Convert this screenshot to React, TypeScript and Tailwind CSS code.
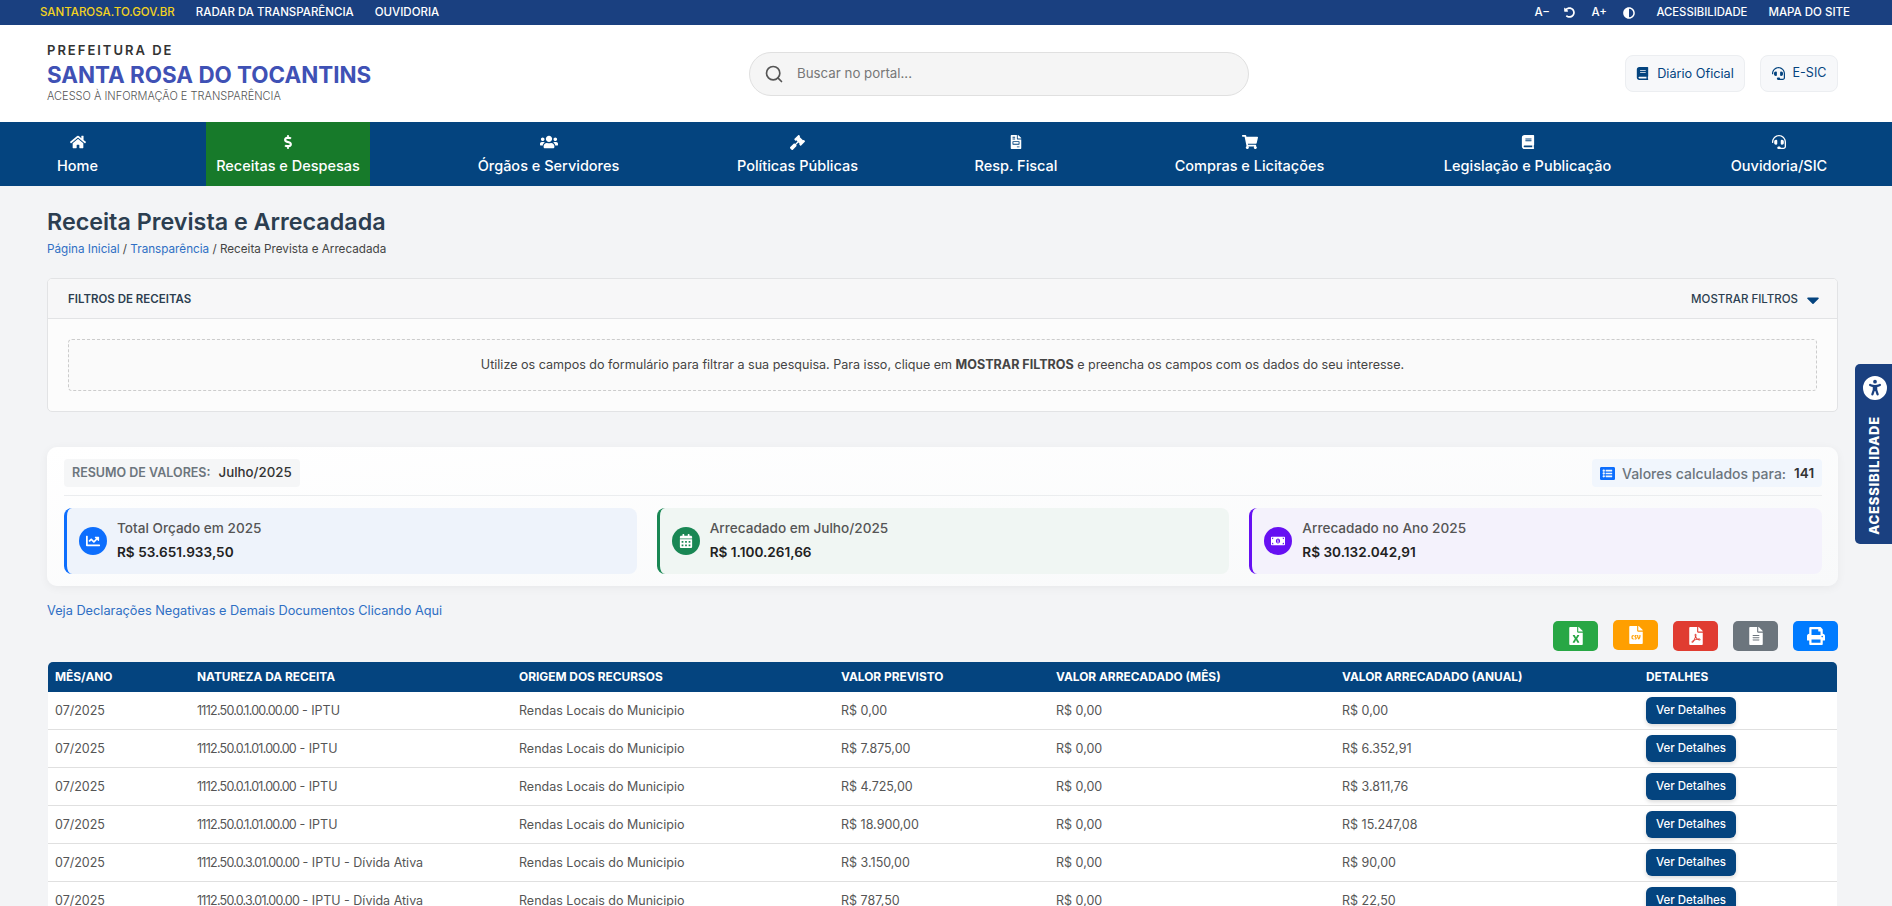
import React from 'react';
import { Search } from 'lucide-react';
import {
  FaHome, FaDollarSign, FaUsers, FaGavel, FaFileInvoice, FaShoppingCart, FaBook, FaHeadset,
  FaUndoAlt, FaAdjust, FaCaretDown, FaListAlt, FaChartLine, FaCalendarAlt, FaMoneyBillAlt,
  FaFileExcel, FaFileCsv, FaFilePdf, FaFileAlt, FaPrint,
} from 'react-icons/fa';
import { FaUniversalAccess } from 'react-icons/fa6';

const navItems = [
  { label: 'Home', icon: FaHome, w: 'w-[61px]', size: 'text-[16px]' },
  { label: 'Receitas e Despesas', icon: FaDollarSign, w: 'w-[164px]', size: 'text-[14px]', active: true },
  { label: 'Órgãos e Servidores', icon: FaUsers, w: 'w-[161px]', size: 'text-[18px]' },
  { label: 'Políticas Públicas', icon: FaGavel, w: 'w-[141px]', size: 'text-[15px]' },
  { label: 'Resp. Fiscal', icon: FaFileInvoice, w: 'w-[100px]', size: 'text-[14px]' },
  { label: 'Compras e Licitações', icon: FaShoppingCart, w: 'w-[171px]', size: 'text-[16px]' },
  { label: 'Legislação e Publicação', icon: FaBook, w: 'w-[189px]', size: 'text-[14px]' },
  { label: 'Ouvidoria/SIC', icon: FaHeadset, w: 'w-[118px]', size: 'text-[14px]' },
];

const rows = [
  ['1112.50.0.1.00.00.00', ' - IPTU', 'R$ 0,00', 'R$ 0,00'],
  ['1112.50.0.1.01.00.00', ' - IPTU', 'R$ 7.875,00', 'R$ 6.352,91'],
  ['1112.50.0.1.01.00.00', ' - IPTU', 'R$ 4.725,00', 'R$ 3.811,76'],
  ['1112.50.0.1.01.00.00', ' - IPTU', 'R$ 18.900,00', 'R$ 15.247,08'],
  ['1112.50.0.3.01.00.00', ' - IPTU - Dívida Ativa', 'R$ 3.150,00', 'R$ 90,00'],
  ['1112.50.0.3.01.00.00', ' - IPTU - Dívida Ativa', 'R$ 787,50', 'R$ 22,50'],
];

const summaryCards = [
  { title: 'Total Orçado em 2025', value: 'R$ 53.651.933,50', icon: FaChartLine, box: 'bg-[#eef3fb] border-[#0d6efd]', circle: 'bg-[#0d6efd]' },
  { title: 'Arrecadado em Julho/2025', value: 'R$ 1.100.261,66', icon: FaCalendarAlt, box: 'bg-[#f0f6f3] border-[#198754]', circle: 'bg-[#198754]' },
  { title: 'Arrecadado no Ano 2025', value: 'R$ 30.132.042,91', icon: FaMoneyBillAlt, box: 'bg-[#f4f2fc] border-[#6610f2]', circle: 'bg-[#6610f2]' },
];

const exportButtons = [
  { icon: FaFileExcel, color: 'bg-[#28a745]', offset: '' },
  { icon: FaFileCsv, color: 'bg-[#ff9f00]', offset: '-mt-px' },
  { icon: FaFilePdf, color: 'bg-[#e03c31]', offset: '' },
  { icon: FaFileAlt, color: 'bg-[#6c757d]', offset: '' },
  { icon: FaPrint, color: 'bg-[#007bff]', offset: '' },
];

export default function App() {
  return (
    <div className="relative h-[906px] overflow-hidden bg-[#f3f4f6] font-['Inter',sans-serif] text-[#333]">
      {/* Barra superior */}
      <div className="flex h-[25px] items-center justify-between bg-[#1a4080] pl-[40px] pr-[42px] text-[11.5px] font-medium text-white">
        <div className="flex items-center gap-[21px]">
          <span className="text-[#f2d21f]">SANTAROSA.TO.GOV.BR</span>
          <span>RADAR DA TRANSPARÊNCIA</span>
          <span>OUVIDORIA</span>
        </div>
        <div className="flex items-center">
          <span className="w-[30px]">A−</span>
          <FaUndoAlt className="mr-[16px] text-[11px]" />
          <span className="w-[32px]">A+</span>
          <FaAdjust className="mr-[21px] text-[12px]" />
          <span className="mr-[21px] text-[11.3px]">ACESSIBILIDADE</span>
          <span>MAPA DO SITE</span>
        </div>
      </div>

      {/* Cabeçalho */}
      <div className="flex h-[97px] items-center bg-white pl-[47px] pr-[54px]">
        <div className="-mt-[2px] w-[702px]">
          <div className="text-[13px] font-semibold leading-[16px] tracking-[2px] text-[#333]">PREFEITURA DE</div>
          <div className="mt-[3px] text-[22.4px] font-bold leading-[28px] text-[#3f51b5]">SANTA ROSA DO TOCANTINS</div>
          <div className="text-[11px] font-light leading-[14px] text-[#555]">ACESSO À INFORMAÇÃO E TRANSPARÊNCIA</div>
        </div>
        <div className="flex h-[44px] w-[500px] items-center rounded-[22px] border border-[#e0e0e0] bg-[#f5f5f5] pl-[14px]">
          <Search className="h-[20px] w-[20px] text-[#555]" />
          <span className="ml-[13px] text-[13.3px] text-[#777]">Buscar no portal...</span>
        </div>
        <div className="ml-auto flex items-center gap-[15px]">
          <div className="flex h-[37px] w-[120px] items-center justify-center gap-[8px] rounded-[8px] border border-[#eceef1] bg-[#f7f8fa] text-[12.7px] text-[#04447f]">
            <FaBook className="text-[13px]" />
            Diário Oficial
          </div>
          <div className="flex h-[37px] w-[78px] items-center justify-center gap-[8px] rounded-[8px] border border-[#eceef1] bg-[#f7f8fa] text-[12.5px] text-[#04447f]">
            <FaHeadset className="text-[13px]" />
            E-SIC
          </div>
        </div>
      </div>

      {/* Menu */}
      <div className="flex h-[64px] justify-between bg-[#04447f] pl-[47px] pr-[54px]">
        {navItems.map((item) => {
          const Icon = item.icon;
          return (
            <div
              key={item.label}
              className={`flex ${item.w} flex-col items-center pt-[13px] text-white ${item.active ? 'bg-[#177a2a]' : ''}`}
            >
              <div className={`flex h-[14px] items-center justify-center ${item.size}`}>
                <Icon />
              </div>
              <span className="mt-[7px] whitespace-nowrap text-[14.5px] font-medium leading-[20px]">{item.label}</span>
            </div>
          );
        })}
      </div>

      <div className="pl-[47px] pr-[54px]">
        <h1 className="pt-[20px] text-[23.3px] font-semibold leading-[32px] text-[#2c3e50]">Receita Prevista e Arrecadada</h1>
        <div className="mt-[2px] text-[11.7px] leading-[18px] text-[#444]">
          <span className="text-[#2f6fc4]">Página Inicial</span> / <span className="text-[#2f6fc4]">Transparência</span> / Receita Prevista e Arrecadada
        </div>

        {/* Filtros */}
        <div className="mt-[20px] h-[134px] overflow-hidden rounded-[5px] border border-[#e2e3e5] bg-[#fcfcfc]">
          <div className="flex h-[40px] items-center justify-between border-b border-[#e2e3e5] bg-[#f7f7f8] pl-[20px] pr-[14px] pt-[2px]">
            <span className="text-[11.5px] font-semibold text-[#2c3e50]">FILTROS DE RECEITAS</span>
            <span className="flex items-center text-[11.5px] font-medium text-[#2c3e50]">
              MOSTRAR FILTROS
              <FaCaretDown className="ml-[5px] text-[20px] text-[#04447f]" />
            </span>
          </div>
          <div className="mx-[20px] mt-[20px] flex h-[52px] items-center justify-center rounded-[4px] border border-dashed border-[#cccccc] bg-[#fafafa] text-[12.55px] text-[#444]">
            <span>
              Utilize os campos do formulário para filtrar a sua pesquisa. Para isso, clique em <b>MOSTRAR FILTROS</b> e preencha os campos com os dados do seu interesse.
            </span>
          </div>
        </div>

        {/* Resumo */}
        <div className="mt-[35px] h-[139px] rounded-[10px] bg-gradient-to-br from-white to-[#f8f9fa] pl-[17px] pr-[16px] pt-[12px] shadow-[0_2px_10px_rgba(0,0,0,0.05)]">
          <div className="flex h-[28px] items-center justify-between">
            <div className="flex h-[28px] w-[236px] items-center gap-[8px] rounded-[4px] bg-[#f5f6f7] px-[8px] text-[12.5px] font-semibold">
              <span className="text-[#6c757d]">RESUMO DE VALORES:</span>
              <span className="text-[13.3px] font-medium text-[#333]">Julho/2025</span>
            </div>
            <div className="flex h-[28px] w-[230px] items-center rounded-[4px] bg-[#f1f6fd] pl-[8px] text-[14px] font-medium">
              <FaListAlt className="mr-[7px] text-[15px] text-[#0d6efd]" />
              <span className="text-[#6c757d]">Valores calculados para:</span>
              <span className="ml-[8px] text-[13.5px] font-semibold text-[#333]">141</span>
            </div>
          </div>
          <div className="mt-[8px] border-t border-[#ebedef]" />
          <div className="mt-[12px] grid grid-cols-3 gap-[20px]">
            {summaryCards.map((card) => {
              const Icon = card.icon;
              return (
                <div key={card.title} className={`flex h-[66px] items-center rounded-[8px] border-l-[3px] pl-[12px] ${card.box}`}>
                  <div className={`flex h-[28px] w-[28px] items-center justify-center rounded-full text-white ${card.circle}`}>
                    <Icon className="text-[14px]" />
                  </div>
                  <div className="-mt-[2px] ml-[10px]">
                    <div className="text-[13.6px] font-medium leading-[18px] text-[#555]">{card.title}</div>
                    <div className="mt-[6px] text-[13.6px] font-semibold leading-[18px] text-[#222]">{card.value}</div>
                  </div>
                </div>
              );
            })}
          </div>
        </div>

        <div className="mt-[15px] text-[12.75px] leading-[20px] text-[#2f6fc4]">Veja Declarações Negativas e Demais Documentos Clicando Aqui</div>

        {/* Exportação */}
        <div className="flex justify-end gap-[15px]">
          {exportButtons.map((btn, i) => {
            const Icon = btn.icon;
            return (
              <div key={i} className={`flex h-[30px] w-[45px] items-center justify-center rounded-[5px] text-[18px] text-white ${btn.color} ${btn.offset}`}>
                <Icon />
              </div>
            );
          })}
        </div>

        {/* Tabela */}
        <table className="ml-px mt-[11px] w-[1789px] table-fixed border-separate border-spacing-0 text-[12.5px] text-[#555]">
          <colgroup>
            <col className="w-[142px]" />
            <col className="w-[322px]" />
            <col className="w-[322px]" />
            <col className="w-[215px]" />
            <col className="w-[286px]" />
            <col className="w-[304px]" />
            <col className="w-[198px]" />
          </colgroup>
          <thead>
            <tr className="h-[30px] bg-[#04447f] text-left text-[11.9px] font-extrabold text-white">
              <th className="rounded-tl-[5px] px-[7px]">MÊS/ANO</th>
              <th className="px-[7px]">NATUREZA DA RECEITA</th>
              <th className="px-[7px]">ORIGEM DOS RECURSOS</th>
              <th className="px-[7px]">VALOR PREVISTO</th>
              <th className="px-[7px]">VALOR ARRECADADO (MÊS)</th>
              <th className="px-[7px]">VALOR ARRECADADO (ANUAL)</th>
              <th className="rounded-tr-[5px] px-[7px]">DETALHES</th>
            </tr>
          </thead>
          <tbody>
            {rows.map((row, i) => (
              <tr key={i} className="h-[38px] bg-white">
                <td className="border-b border-[#e0e0e0] px-[7px] pt-[2px]">07/2025</td>
                <td className="border-b border-[#e0e0e0] px-[7px] pt-[2px]">
                  <span className="tracking-[-0.75px]">{row[0]}</span>
                  {row[1]}
                </td>
                <td className="border-b border-[#e0e0e0] px-[7px] pt-[2px]">Rendas Locais do Municipio</td>
                <td className="border-b border-[#e0e0e0] px-[7px] pt-[2px]">{row[2]}</td>
                <td className="border-b border-[#e0e0e0] px-[7px] pt-[2px]">R$ 0,00</td>
                <td className="border-b border-[#e0e0e0] px-[7px] pt-[2px]">{row[3]}</td>
                <td className="border-b border-[#e0e0e0] px-[7px]">
                  <div className="flex h-[27px] w-[90px] items-center justify-center rounded-[6px] bg-[#04447f] text-[11.5px] font-medium text-white shadow-[0_2px_4px_rgba(0,0,0,0.15)]">
                    Ver Detalhes
                  </div>
                </td>
              </tr>
            ))}
          </tbody>
        </table>
      </div>

      {/* Aba lateral de acessibilidade */}
      <div className="absolute right-0 top-[364px] flex h-[180px] w-[37px] flex-col items-center rounded-l-[5px] bg-[#1a4080] pl-[3px] pt-[12px] text-white">
        <FaUniversalAccess className="h-[24px] w-[24px] shrink-0" />
        <span className="mt-[16px] rotate-180 whitespace-nowrap text-[13px] font-extrabold tracking-[0.8px] [writing-mode:vertical-rl]">ACESSIBILIDADE</span>
      </div>
    </div>
  );
}
